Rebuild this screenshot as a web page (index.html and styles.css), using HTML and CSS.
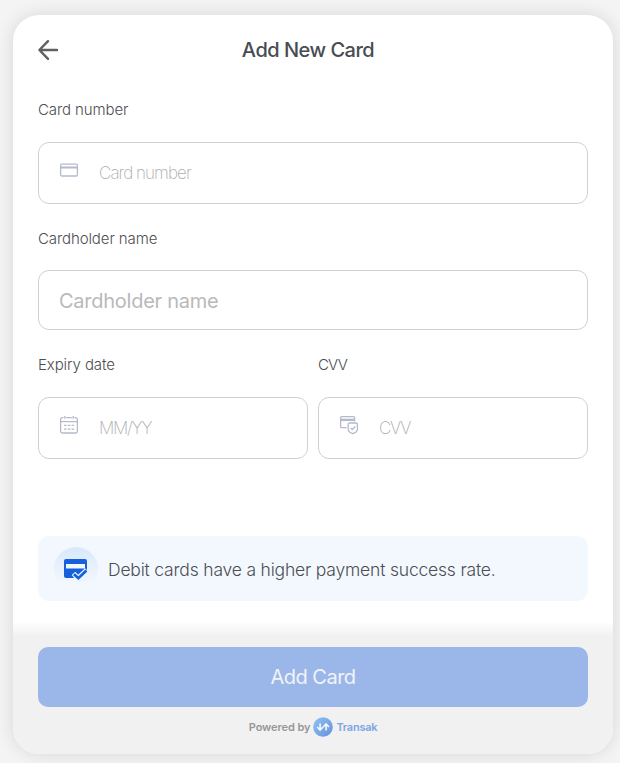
FILE: index.html
```html
<!DOCTYPE html>
<html lang="en">
<head>
    <meta charset="UTF-8">
    <meta name="viewport" content="width=device-width, initial-scale=1.0">
    <title>Add New Card</title>
    <link rel="stylesheet" href="styles.css">
</head>
<body>
    <div class="card">
        <!-- Header -->
        <div class="header">
            <button class="back" type="button" aria-label="Back">
                <svg width="22" height="22" viewBox="0 0 22 22" fill="none" stroke="#5f6062" stroke-width="2.4" stroke-linecap="round" stroke-linejoin="round">
                    <path d="M20 11H2.6M11 2.2L2.4 11l8.6 8.8"/>
                </svg>
            </button>
            <h1>Add New Card</h1>
        </div>

        <!-- Card form -->
        <form class="form">
            <div class="field">
                <label class="label-number" for="number">Card number</label>
                <div class="box">
                    <svg class="icon icon-card" width="20" height="20" viewBox="0 0 20 20" fill="none" stroke="#b4bacb" stroke-width="1.3">
                        <rect x="1.6" y="4.2" width="16.8" height="11.8" rx="1.2"/>
                        <path d="M2 7.5h16" stroke-width="2.2"/>
                    </svg>
                    <input class="thin input-number" type="text" id="number" placeholder="Card number">
                </div>
            </div>
            <div class="field field-name">
                <label class="label-name" for="name">Cardholder name</label>
                <div class="box box-name">
                    <input class="input-name" type="text" id="name" placeholder="Cardholder name">
                </div>
            </div>
            <div class="row">
                <div class="field">
                    <label class="label-expiry" for="expiry">Expiry date</label>
                    <div class="box">
                        <svg class="icon" width="20" height="20" viewBox="0 0 20 20" fill="none" stroke="#b4bacb" stroke-width="1.3">
                            <path d="M4.5 2.7H3.4a1.8 1.8 0 0 0-1.8 1.8v11.7A1.8 1.8 0 0 0 3.4 18h13.2a1.8 1.8 0 0 0 1.8-1.8V4.5a1.8 1.8 0 0 0-1.8-1.8h-1.1M7.2 2.7h5.6M1.6 6.7h16.8M5.8 1v2.8M14.2 1v2.8"/>
                            <path d="M5 10.3h2.6M8.8 10.3h2.6M12.6 10.3h2.6M5 14.2h2.6M8.8 14.2h2.6M12.6 14.2h2.6"/>
                        </svg>
                        <input class="thin input-expiry" type="text" id="expiry" placeholder="MM/YY">
                    </div>
                </div>
                <div class="field">
                    <label class="label-cvv" for="cvv">CVV</label>
                    <div class="box">
                        <svg class="icon" width="20" height="20" viewBox="0 0 20 20" fill="none" stroke="#b4bacb" stroke-width="1.3">
                            <path d="M7.5 12.6H2.8a1.2 1.2 0 0 1-1.2-1.2V2.8a1.2 1.2 0 0 1 1.2-1.2h11.6a1.2 1.2 0 0 1 1.2 1.2v3.4"/>
                            <path d="M1.6 4.9h14" stroke-width="2.4"/>
                            <path d="M9.2 8.9l1.3-.9h6.6l1.3.9v5.3c0 2-1.9 3.5-4.6 4.5-2.7-1-4.6-2.5-4.6-4.5z"/>
                            <path d="M11.7 13l1.6 1.5 3-3"/>
                        </svg>
                        <input class="thin input-cvv" type="text" id="cvv" placeholder="CVV">
                    </div>
                </div>
            </div>
        </form>

        <!-- Debit card tip -->
        <div class="tip">
            <div class="tip-icon">
                <svg width="26" height="24" viewBox="0 0 26 24" fill="none">
                    <rect x="1" y="2" width="23" height="19" rx="2" fill="#1461db"/>
                    <path d="M3 7h19v4.5H3z" fill="#f3f8ff"/>
                    <path d="M9.5 16.5l5.5 5 8.5-8.5h2.5v11H12z" fill="#eef5ff"/>
                    <path d="M10.5 16.5l4.7 4.7 8.6-8" stroke="#eef5ff" stroke-width="5"/>
                    <path d="M11 17.2l4.4 4 8-7.6" stroke="#1461db" stroke-width="2.8"/>
                </svg>
            </div>
            <p>Debit cards have a higher payment success rate.</p>
        </div>

        <!-- Footer -->
        <div class="footer">
            <button class="submit" type="button">Add Card</button>
            <div class="powered">
                <span class="powered-by">Powered by</span>
                <svg width="20" height="20" viewBox="0 0 20 20" fill="none">
                    <defs>
                        <linearGradient id="logo" x1="0" y1="0" x2="1" y2="1">
                            <stop offset="0" stop-color="#8fc4f3"/>
                            <stop offset="1" stop-color="#6590dc"/>
                        </linearGradient>
                    </defs>
                    <circle cx="10" cy="10" r="9.8" fill="url(#logo)"/>
                    <path d="M4.2 10l2.9 3 2.9-3M7.1 6.4V13M10.2 10l2.9-3 2.9 3M13.1 7v6.4" stroke="#f5f8fc" stroke-width="1.6"/>
                </svg>
                <span class="brand">Transak</span>
            </div>
        </div>
    </div>
</body>
</html>
```

FILE: styles.css
```css
* {
    box-sizing: border-box;
}
body {
    margin: 0;
    padding: 15px 7px 9px 13px;
    height: 763px;
    overflow: hidden;
    background-color: #f4f4f4;
    font-family: Inter, "Liberation Sans", sans-serif;
}
.card {
    display: flex;
    flex-direction: column;
    width: 600px;
    height: 739px;
    border-radius: 26px;
    background-color: white;
    box-shadow: 0 0 18px rgba(0,0,0,0.12);
    overflow: hidden;
}
.header {
    display: grid;
    grid-template-columns: 22px 1fr 32px;
    align-items: center;
    height: 70px;
    padding: 0 24px;
}
.back {
    display: flex;
    padding: 0;
    border: none;
    background: none;
}
h1 {
    margin: 0;
    text-align: center;
    font-size: 20px;
    font-weight: 500;
    letter-spacing: -0.5px;
    color: #484c52;
}
.form {
    padding: 0 25px;
}
.field {
    display: flex;
    flex-direction: column;
    flex: 1;
}
label {
    height: 57px;
    padding-top: 15px;
    font-size: 15px;
    line-height: 20px;
    font-weight: 300;
    letter-spacing: -0.1px;
    color: #4c4e52;
}
.label-name {
    padding-top: 16px;
}
.label-cvv {
    letter-spacing: -0.8px;
}
.field-name {
    padding-top: 9px;
}
.row {
    display: flex;
    gap: 10px;
    padding-top: 10px;
}
.box {
    display: flex;
    align-items: center;
    height: 62px;
    padding: 0 20px;
    border: 1px solid #d0d0d0;
    border-radius: 11px;
}
.box-name {
    height: 60px;
    padding-top: 2px;
}
.icon {
    flex: none;
    margin: -7px 20px 0 0;
}
input {
    width: 100%;
    min-width: 0;
    padding: 0;
    border: none;
    outline: none;
    background: none;
    font-family: inherit;
    font-size: 20px;
    letter-spacing: -0.25px;
}
input::placeholder {
    color: #b9b9b9;
    opacity: 1;
}
.thin {
    font-size: 17px;
    font-weight: 200;
    letter-spacing: -0.95px;
}
.thin::placeholder {
    color: #adadad;
}
.input-expiry {
    letter-spacing: -1.2px;
}
.input-cvv {
    letter-spacing: -1.3px;
}
.tip {
    display: flex;
    align-items: center;
    height: 65px;
    margin: 77px 25px 0;
    padding-left: 16px;
    border-radius: 11px;
    background-color: #f3f8ff;
}
.tip-icon {
    display: flex;
    align-items: center;
    justify-content: center;
    width: 44px;
    height: 44px;
    border-radius: 50%;
    background: linear-gradient(#d9e8fd, #f3f8ff 85%);
}
.tip p {
    margin: 2px 0 0 10px;
    font-size: 17.5px;
    font-weight: 300;
    letter-spacing: -0.19px;
    color: #4c4e52;
}
.footer {
    flex: 1;
    margin-top: 20px;
    padding: 26px 25px 0;
    background: linear-gradient(rgba(241,241,241,0), #f1f1f1 15px);
}
.submit {
    display: block;
    width: 100%;
    height: 60px;
    border: none;
    border-radius: 10px;
    background-color: #9bb7e9;
    color: #f1f3f6;
    font-family: inherit;
    font-size: 20px;
    letter-spacing: -0.5px;
}
.powered {
    display: flex;
    align-items: center;
    justify-content: center;
    gap: 3px;
    height: 20px;
    margin-top: 10px;
    font-size: 11px;
    font-weight: 600;
    letter-spacing: -0.08px;
    color: #979797;
}
.brand {
    letter-spacing: -0.25px;
    color: #7ca5e6;
}
```
